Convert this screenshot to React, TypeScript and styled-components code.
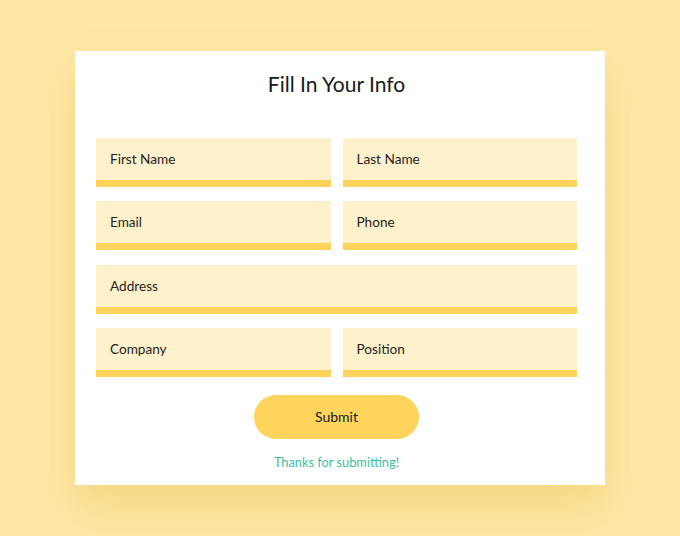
import React from "react";
import styled, { createGlobalStyle } from "styled-components";

const GlobalStyle = createGlobalStyle`
  html, body {
    margin: 0;
    padding: 0;
    background: #fee7a6;
  }
  body {
    font-family: "Lato", "Noto Sans", sans-serif;
    color: #1f1f1f;
  }
  * { box-sizing: border-box; }
`;

const Page = styled.div`
  width: 680px;
  height: 536px;
  background: #fee7a6;
  padding-top: 51px;
  display: flex;
  justify-content: center;
  align-items: flex-start;
`;

const Card = styled.form`
  width: 530px;
  height: 434px;
  background: #ffffff;
  padding: 18px 28px 0 21px;
  display: flex;
  flex-direction: column;
  align-items: center;
  box-shadow: 0 22px 36px rgba(232, 186, 70, 0.35);
`;

const Title = styled.h1`
  margin: 0;
  font-family: "Lato", "Noto Sans", sans-serif;
  font-weight: 400;
  font-size: 21px;
  line-height: 30px;
  color: #1a1a1a;
`;

const Fields = styled.div`
  margin-top: 39px;
  width: 100%;
  display: grid;
  grid-template-columns: 1fr 1fr;
  column-gap: 12px;
  row-gap: 14.34px;
`;

const Field = styled.input<{ $wide?: boolean }>`
  grid-column: ${(p) => (p.$wide ? "1 / span 2" : "auto")};
  height: 49px;
  width: 100%;
  border: none;
  border-bottom: 7px solid #fdd35c;
  background: #fef1cb;
  padding: 0 13px 0 14px;
  font-family: "Lato", "Noto Sans", sans-serif;
  font-size: 13.6px;
  color: #1f1f1f;
  outline: none;
  &::placeholder {
    color: #1f1f1f;
    opacity: 1;
  }
`;

const SubmitButton = styled.button`
  margin-top: 18px;
  width: 165px;
  height: 44px;
  border: none;
  border-radius: 22px;
  background: #fed45c;
  font-family: "Lato", "Noto Sans", sans-serif;
  font-size: 14px;
  color: #1a1a1a;
  cursor: pointer;
`;

const Thanks = styled.p`
  margin: 14px 0 0;
  font-family: "Lato", "Noto Sans", sans-serif;
  font-size: 12.8px;
  line-height: 18px;
  color: #3dbf9d;
`;

export default function App() {
  return (
    <>
      <GlobalStyle />
      <Page>
        <Card onSubmit={(e) => e.preventDefault()}>
          <Title>Fill In Your Info</Title>
          <Fields>
            <Field placeholder="First Name" />
            <Field placeholder="Last Name" />
            <Field placeholder="Email" />
            <Field placeholder="Phone" />
            <Field $wide placeholder="Address" />
            <Field placeholder="Company" />
            <Field placeholder="Position" />
          </Fields>
          <SubmitButton type="submit">Submit</SubmitButton>
          <Thanks>Thanks for submitting!</Thanks>
        </Card>
      </Page>
    </>
  );
}
